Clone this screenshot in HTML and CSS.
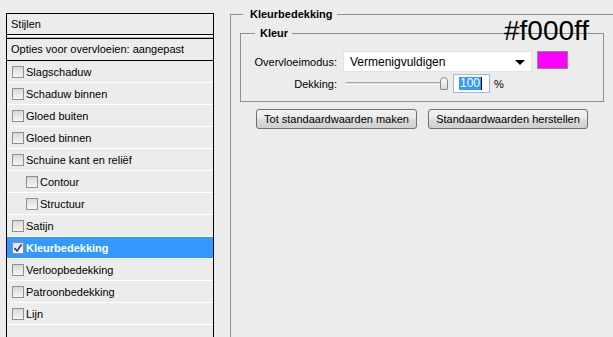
FILE: index.html
```html
<!DOCTYPE html>
<html lang="nl">
<head>
    <meta charset="UTF-8">
    <title>Laagstijl</title>
    <link rel="stylesheet" href="styles.css">
</head>
<body>
    <div class="styles-list">
        <div class="list-head">Stijlen</div>
        <div class="list-split"></div>
        <div class="list-options">Opties voor overvloeien: aangepast</div>
        <div class="item"><span class="check"></span>Slagschaduw</div>
        <div class="item"><span class="check"></span>Schaduw binnen</div>
        <div class="item"><span class="check"></span>Gloed buiten</div>
        <div class="item"><span class="check"></span>Gloed binnen</div>
        <div class="item"><span class="check"></span>Schuine kant en reliëf</div>
        <div class="item sub"><span class="check"></span>Contour</div>
        <div class="item sub"><span class="check"></span>Structuur</div>
        <div class="item"><span class="check"></span>Satijn</div>
        <div class="item selected"><span class="check checked">
            <svg width="10" height="10" viewBox="0 0 10 10"><path d="M1.5 5 L4 8 L8.5 1.5" fill="none" stroke="#2a3d7a" stroke-width="1.6"/></svg>
        </span>Kleurbedekking</div>
        <div class="item"><span class="check"></span>Verloopbedekking</div>
        <div class="item"><span class="check"></span>Patroonbedekking</div>
        <div class="item"><span class="check"></span>Lijn</div>
        <div class="item"></div>
    </div>

    <fieldset class="panel">
        <legend>Kleurbedekking</legend>
        <fieldset class="group">
            <legend>Kleur</legend>
            <div class="row">
                <label class="label">Overvloeimodus:</label>
                <div class="select">Vermenigvuldigen<span class="arrow"></span></div>
                <div class="swatch"></div>
            </div>
            <div class="row row-opacity">
                <label class="label">Dekking:</label>
                <div class="slider"><span class="track"></span><span class="thumb"></span></div>
                <div class="num"><span class="sel">100</span></div>
                <span class="pct">%</span>
            </div>
        </fieldset>
        <div class="buttons">
            <button type="button" class="btn btn-make">Tot standaardwaarden maken</button>
            <button type="button" class="btn btn-reset">Standaardwaarden herstellen</button>
        </div>
    </fieldset>

    <div class="hex">#f000ff</div>
</body>
</html>
```

FILE: styles.css
```css
* {
    box-sizing: border-box;
}

body {
    margin: 0;
    height: 337px;
    overflow: hidden;
    background: #ececec;
    display: flex;
    align-items: flex-start;
    font-family: "Liberation Sans", Arial, sans-serif;
    font-size: 11px;
    color: #000;
    position: relative;
}

/* linker lijst */
.styles-list {
    margin: 13px 0 0 6px;
    width: 208px;
    height: 330px;
    border: 1px solid #000;
    border-bottom: none;
}

.list-head {
    height: 21px;
    line-height: 20px;
    padding-left: 4px;
    border-bottom: 1px solid #000;
}

.list-split {
    height: 3px;
    background: #f8f8f8;
    border-bottom: 1px solid #b5b5b5;
}

.list-options {
    height: 23px;
    line-height: 21px;
    padding-left: 4px;
    border-top: 1px solid #000;
    border-bottom: 1px solid #000;
}

.item {
    height: 22px;
    border-bottom: 1px solid #fff;
    display: flex;
    align-items: center;
    padding-left: 5px;
}

.item.sub {
    padding-left: 19px;
}

.item.selected {
    background: #3399ff;
    color: #fff;
    font-weight: bold;
}

.check {
    width: 12px;
    height: 12px;
    margin-right: 2px;
    border: 1px solid #8e8f8f;
    background: linear-gradient(#d8d8d8, #f6f6f6);
    display: flex;
    align-items: center;
    justify-content: center;
}

.check.checked {
    background: linear-gradient(#dde0e8, #fafafa);
}

/* rechter paneel */
.panel {
    flex: 1;
    margin: 7px 0 0 16px;
    padding: 5px 0 0 9px;
    height: 340px;
    border: 1px solid #8e8e8e;
    border-right: none;
    border-bottom: none;
    min-width: 0;
}

.panel legend,
.group legend {
    font-weight: bold;
    line-height: 14px;
}

.panel > legend {
    margin-left: 3px;
    padding: 0 4px 0 7px;
}

.group {
    width: 364px;
    margin: 0;
    padding: 11px 0 8px 0;
    border: 1px solid #8e8e8e;
}

.group > legend {
    margin-left: 14px;
    padding: 0 4px 0 5px;
}

.row {
    display: flex;
    align-items: center;
    height: 21px;
}

.row-opacity {
    margin-top: 2px;
    height: 19px;
}

.label {
    width: 96px;
    text-align: right;
}

.select {
    position: relative;
    margin-left: 6px;
    width: 189px;
    height: 21px;
    line-height: 20px;
    padding-left: 6px;
    background: #fff;
    border: 1px solid #e2e2e2;
    font-size: 12px;
}

.arrow {
    position: absolute;
    right: 6px;
    top: 8px;
    border-left: 5px solid transparent;
    border-right: 5px solid transparent;
    border-top: 5px solid #000;
}

.swatch {
    margin-left: 5px;
    width: 31px;
    height: 18px;
    align-self: flex-start;
    background: #ff00ff;
    border: 1px solid #8a8a8a;
}

.slider {
    position: relative;
    margin-left: 9px;
    width: 102px;
    height: 19px;
}

.track {
    position: absolute;
    left: 0;
    right: 4px;
    top: 8px;
    height: 3px;
    border-top: 1px solid #a9a9a9;
    border-bottom: 1px solid #fff;
    background: #dcdcdc;
}

.thumb {
    position: absolute;
    left: 94px;
    top: 3px;
    width: 8px;
    height: 13px;
    border: 1px solid #8a8a8a;
    border-radius: 4px 4px 1px 1px;
    background: linear-gradient(#fdfdfd, #dadada);
}

.num {
    margin-left: 5px;
    width: 37px;
    height: 19px;
    padding: 2px 0 0 5px;
    background: #fff;
    border: 1px solid #a5b8d6;
}

.sel {
    display: inline-block;
    background: #3399ff;
    color: #fff;
    line-height: 13px;
    padding: 0 1px;
    border-right: 1px solid #000;
    font-size: 12px;
}

.pct {
    margin-left: 4px;
}

.buttons {
    display: flex;
    gap: 11px;
    margin: 7px 0 0 16px;
}

.btn {
    height: 20px;
    padding: 0;
    border: 1px solid #707070;
    border-radius: 3px;
    background: linear-gradient(#f2f2f2 0%, #ebebeb 45%, #dddddd 50%, #cfcfcf 100%);
    font-family: inherit;
    font-size: 11px;
    color: #000;
}

.btn-make {
    width: 161px;
}

.btn-reset {
    width: 160px;
}

/* overlay label */
.hex {
    position: absolute;
    left: 504px;
    top: 15px;
    font-family: "Liberation Sans", Arial, sans-serif;
    font-size: 28px;
    line-height: 32px;
    color: #000;
}
```
